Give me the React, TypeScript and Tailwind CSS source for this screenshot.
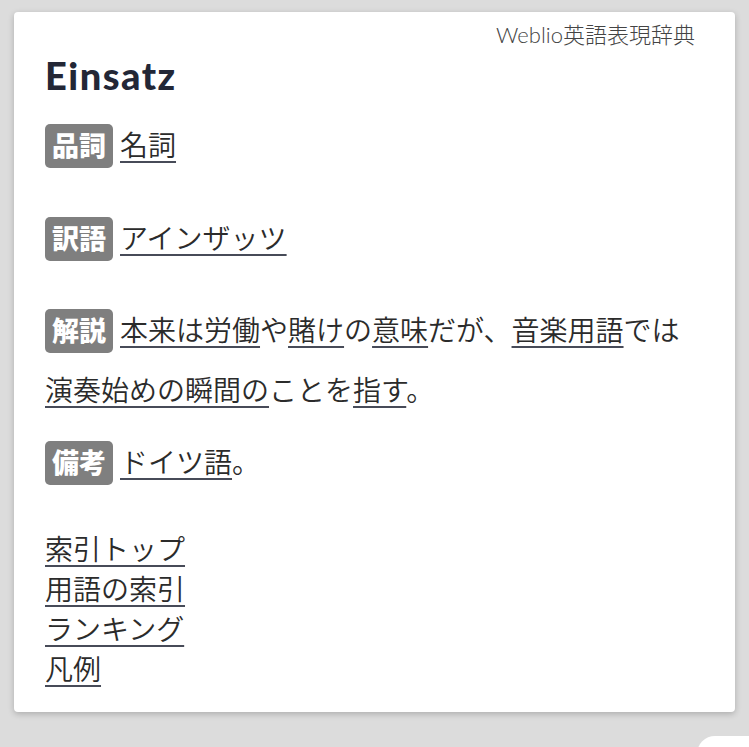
const jp = "font-['Lato','Noto_Sans_CJK_JP',sans-serif]";

function Badge({ label }: { label: string }) {
  return (
    <span className="mr-[7px] inline-block h-[44px] -translate-y-[3px] rounded-[5px] bg-[#7f7f7f] px-[7px] align-middle text-[27px] font-black leading-[44px] text-white">
      {label}
    </span>
  );
}

function L({ children }: { children: React.ReactNode }) {
  return (
    <a href="#" className="underline decoration-[#474b58] decoration-2 underline-offset-[5px]">
      {children}
    </a>
  );
}

export default function App() {
  return (
    <div className={`h-[747px] overflow-hidden bg-[#dcdcdc] pt-[12px] ${jp}`}>
      <div className="mx-[14px] h-[700px] rounded-[4px] bg-white px-[31px] pt-[11px] text-[#2b2b2b] shadow-[0_2px_6px_rgba(0,0,0,0.22)]">
        <div className="pr-[9px] text-right text-[22px] font-light leading-[24px] text-[#444]">
          Weblio英語表現辞典
        </div>
        <h1 className="mt-[6px] font-['Lato',sans-serif] text-[38px] font-black leading-[44px] tracking-[1.5px] text-[#232736]">
          Einsatz
        </h1>

        <div className="font-[350]">
          <p className="mt-[18px] text-[28px] leading-[60px]">
            <Badge label="品詞" />
            <L>名詞</L>
          </p>
          <p className="mt-[33px] text-[28px] leading-[60px]">
            <Badge label="訳語" />
            <L>アインザッツ</L>
          </p>
          <p className="mt-[32px] text-[28px] leading-[60px]">
            <Badge label="解説" />
            <L>本来は労働</L>や<L>賭け</L>の<L>意味</L>だが、<L>音楽用語</L>では
            <L>演奏始めの瞬間の</L>ことを<L>指す</L>。
          </p>
          <p className="mt-[12px] text-[28px] leading-[60px]">
            <Badge label="備考" />
            <L>ドイツ語</L>。
          </p>

          <ul className="mt-[37px] text-[28px] leading-[40px]">
            <li><L>索引トップ</L></li>
            <li><L>用語の索引</L></li>
            <li><L>ランキング</L></li>
            <li><L>凡例</L></li>
          </ul>
        </div>
      </div>
      <div className="ml-[697px] mt-[24px] h-[30px] rounded-tl-[18px] bg-white" />
    </div>
  );
}
